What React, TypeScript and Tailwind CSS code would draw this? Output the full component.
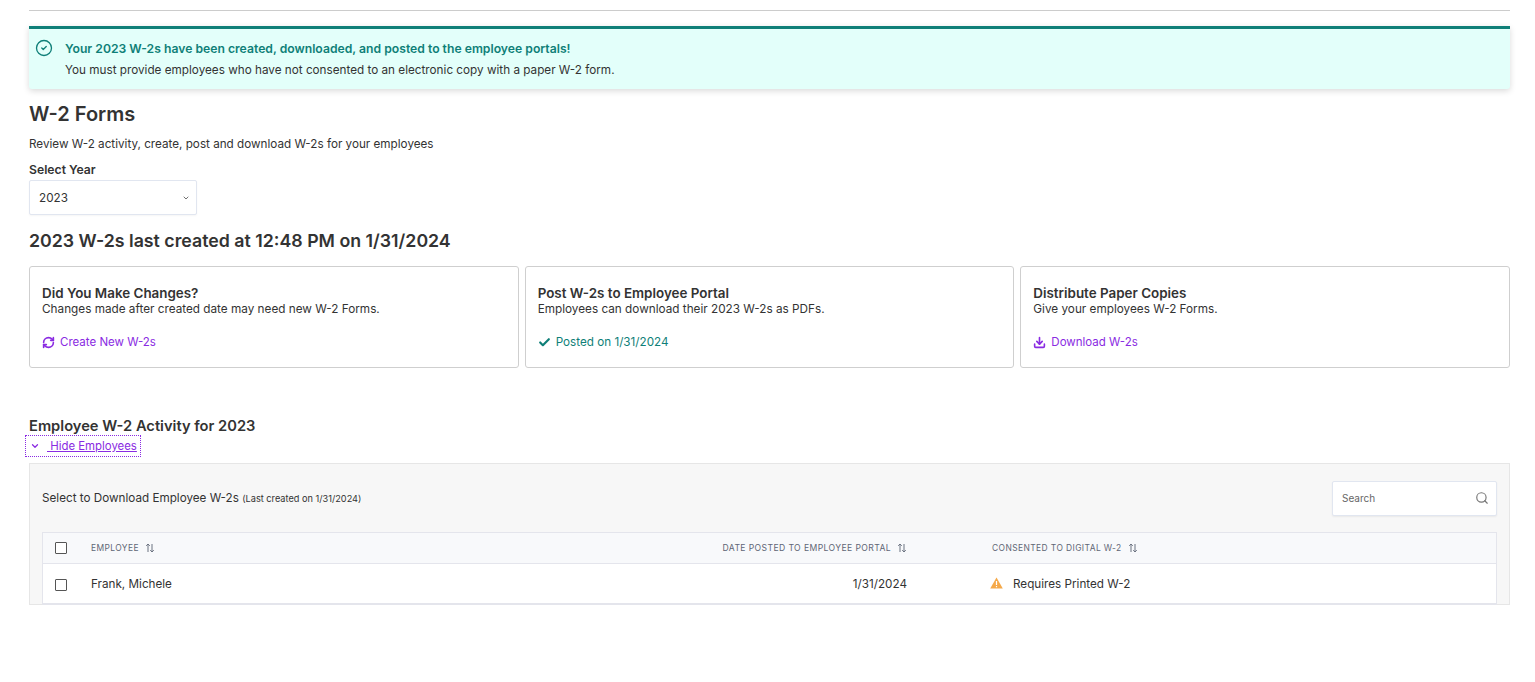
import React from "react";
import { Check, ChevronDown, Download, RefreshCw, Search, CircleCheck } from "lucide-react";

function SortIcon() {
  return (
    <svg width="10" height="10" viewBox="0 0 10 10" fill="none" stroke="#6b7280" strokeWidth="1" className="ml-[6px] shrink-0">
      <path d="M3 9V1M1.2 2.8 3 1l1.8 1.8M7 1v8M5.2 7.2 7 9l1.8-1.8" />
    </svg>
  );
}

function Box() {
  return <span className="block w-3 h-3 border border-[#555] bg-white rounded-[1px]" />;
}

function Card({ title, text, children }: { title: string; text: string; children: React.ReactNode }) {
  return (
    <div className="h-[102px] border border-[#cfcfcf] rounded-[3px] bg-white pl-3 pt-[18px]">
      <div className="text-[13.4px] leading-[16px] font-semibold text-[#333]">{title}</div>
      <div className="text-[11.75px] leading-[16px] text-[#333]">{text}</div>
      <div className="mt-[17px] flex items-center text-[11.5px] leading-[16px]">{children}</div>
    </div>
  );
}

export default function App() {
  return (
    <div className="min-h-[682px] bg-white pl-[29px] pr-[25px] pt-[10px] pb-[77px] text-[#333] font-['Inter','Liberation_Sans',sans-serif]">
      <div className="h-px bg-[#cccccc]" />
      <div className="mt-[15px] h-[63px] border-t-[3px] border-[#0f7f78] bg-[#e3fffa] rounded-b-[3px] shadow-[0_2px_6px_rgba(0,0,0,0.15)] flex">
        <CircleCheck className="w-[18px] h-[18px] ml-[6px] mt-[10px] text-[#0f7f78] shrink-0" strokeWidth={1.75} />
        <div className="ml-3 pt-[12px]">
          <div className="text-[12.2px] leading-[16px] font-semibold text-[#0f7f78]">
            Your 2023 W-2s have been created, downloaded, and posted to the employee portals!
          </div>
          <div className="text-[11.72px] leading-[16px] mt-[5px] text-[#333]">
            You must provide employees who have not consented to an electronic copy with a paper W-2 form.
          </div>
        </div>
      </div>

      <h1 className="mt-[12px] text-xl leading-[26px] font-semibold text-[#333]">W-2 Forms</h1>
      <p className="mt-[9px] text-[11.7px] leading-[16px] text-[#333]">Review W-2 activity, create, post and download W-2s for your employees</p>
      <div className="mt-[10px] text-[12.2px] leading-[16px] font-semibold text-[#333]">Select Year</div>
      <div className="mt-[2px] w-[168px] h-[35px] border border-[#e1e6f0] rounded-[2px] bg-white flex items-center justify-between pl-[9px] pr-[6px] text-[11.7px] shadow-[0_1px_2px_rgba(0,0,0,0.04)]">
        <span className="pt-[2px]">2023</span>
        <ChevronDown className="w-2 h-2 text-[#555]" strokeWidth={2.5} />
      </div>

      <h2 className="mt-[14px] text-[17.75px] leading-[24px] font-semibold text-[#333]">2023 W-2s last created at 12:48 PM on 1/31/2024</h2>

      <div className="mt-[13px] grid grid-cols-3 gap-[6px]">
        <Card title="Did You Make Changes?" text="Changes made after created date may need new W-2 Forms.">
          <RefreshCw className="w-[13px] h-[13px] text-[#8a2be2] mr-[5px]" strokeWidth={3} />
          <span className="text-[#8a2be2]">Create New W-2s</span>
        </Card>
        <Card title="Post W-2s to Employee Portal" text="Employees can download their 2023 W-2s as PDFs.">
          <Check className="w-[13px] h-[13px] text-[#0f7f78] mr-[5px]" strokeWidth={4} />
          <span className="text-[#0f7f78] text-[11.7px]">Posted on 1/31/2024</span>
        </Card>
        <Card title="Distribute Paper Copies" text="Give your employees W-2 Forms.">
          <Download className="w-[13px] h-[13px] text-[#8a2be2] mr-[5px]" strokeWidth={3} />
          <span className="text-[#8a2be2]">Download W-2s</span>
        </Card>
      </div>

      <h3 className="mt-[49px] -mb-px text-[14.7px] leading-[19px] font-semibold text-[#333]">Employee W-2 Activity for 2023</h3>
      <div className="-ml-[4px] w-fit h-[22px] border border-dotted border-[#8a2be2] flex items-center pl-[4px] pr-[3px] text-[11.4px] text-[#8a2be2]">
        <ChevronDown className="w-[10px] h-[10px] mr-[7px]" strokeWidth={3} />
        <span className="underline pt-px">&nbsp;Hide Employees</span>
      </div>

      <div className="mt-[6px] h-[142px] border border-[#e6e6e6] bg-[#f7f7f7] px-3">
        <div className="h-[68px] flex items-center justify-between">
          <div className="text-[11.7px] text-[#333] pt-px">
            Select to Download Employee W-2s <span className="text-[9.2px]">(Last created on 1/31/2024)</span>
          </div>
          <div className="w-[165px] h-[35px] border border-[#e1e6f0] rounded-[2px] bg-white flex items-center justify-between pl-[9px] pr-[7px] shadow-[0_1px_2px_rgba(0,0,0,0.06)]">
            <span className="text-[10px] text-[#666]">Search</span>
            <Search className="w-[14px] h-[14px] text-[#777]" strokeWidth={2} />
          </div>
        </div>
        <div className="border border-[#e4e5ec] border-b-2 bg-white">
          <div className="h-[31px] bg-[#f8f9fb] border-b border-[#e4e5ec] grid grid-cols-[48px_816px_1fr] items-center text-[8.45px] tracking-[0.4px] text-[#5f6675]">
            <div className="pl-3"><Box /></div>
            <div className="flex items-center justify-between">
              <span className="flex items-center">EMPLOYEE <SortIcon /></span>
              <span className="flex items-center text-[8.6px]">DATE POSTED TO EMPLOYEE PORTAL <SortIcon /></span>
            </div>
            <div className="flex items-center pl-[85px]">CONSENTED TO DIGITAL W-2 <SortIcon /></div>
          </div>
          <div className="h-[39px] pt-[2px] grid grid-cols-[48px_816px_1fr] items-center text-[11.7px] text-[#333]">
            <div className="pl-3"><Box /></div>
            <div className="flex justify-between">
              <span>Frank, Michele</span>
              <span>1/31/2024</span>
            </div>
            <div className="flex items-center pl-[83px]">
              <svg width="13" height="12" viewBox="0 0 13 12" className="mr-[10px] -mt-[2px]">
                <path d="M6.5.5 12.8 11.5H.2Z" fill="#f5a94a" />
                <path d="M6.5 4v4M6.5 9v1.2" stroke="#fff" strokeWidth="1.2" />
              </svg>
              Requires Printed W-2
            </div>
          </div>
        </div>
      </div>
    </div>
  );
}
